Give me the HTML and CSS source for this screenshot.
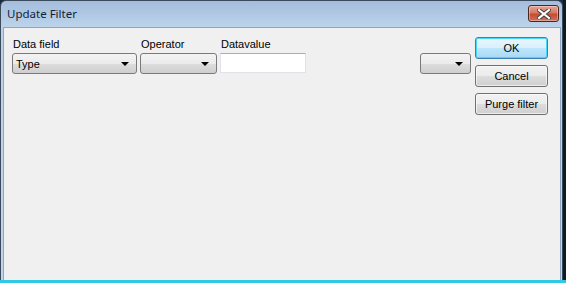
FILE: index.html
```html
<!DOCTYPE html>
<html>
    <head>
        <title>Update Filter</title>
        <link rel="stylesheet" href="styles.css">
    </head>
    <body>
        <div class="screen">
            <div class="window">
                <div class="titlebar">
                    <span class="title">Update Filter</span>
                    <button class="close-btn" type="button">
                        <svg width="14" height="10" viewBox="0 0 14 10">
                            <path d="M2 1 L12 9 M12 1 L2 9" stroke="#3a3a3a" stroke-width="4" stroke-linecap="square"/>
                            <path d="M2 1 L12 9 M12 1 L2 9" stroke="#ffffff" stroke-width="2.2" stroke-linecap="square"/>
                        </svg>
                    </button>
                </div>
                <div class="client">
                    <div class="filter-row">
                        <div class="field field-data">
                            <label>Data field</label>
                            <div class="combo combo-wide"><span>Type</span><i class="arrow"></i></div>
                        </div>
                        <div class="field field-op">
                            <label>Operator</label>
                            <div class="combo combo-op"><span></span><i class="arrow"></i></div>
                        </div>
                        <div class="field field-value">
                            <label>Datavalue</label>
                            <div class="textbox"></div>
                        </div>
                        <div class="field field-extra">
                            <div class="combo combo-small"><span></span><i class="arrow"></i></div>
                        </div>
                    </div>
                    <div class="buttons">
                        <button class="btn btn-default" type="button">OK</button>
                        <button class="btn" type="button">Cancel</button>
                        <button class="btn" type="button">Purge filter</button>
                    </div>
                </div>
            </div>
            <div class="outside"></div>
        </div>
        <div class="taskbar-edge"></div>
    </body>
</html>
```

FILE: styles.css
```css
:root {
    --client-bg: #f0f0f0;
    --title-font: "Noto Sans", "Open Sans", sans-serif;
    --ui-font: "Liberation Sans", Arial, sans-serif;
}

*, *::before, *::after {
    box-sizing: border-box;
}

body {
    margin: 0px;
    width: 566px;
    height: 283px;
    overflow: hidden;
    background-color: #1b2a38;
    font-family: var(--ui-font);
}

.screen {
    display: flex;
    height: 280px;
}

.window {
    width: 563px;
    height: 280px;
    display: flex;
    flex-direction: column;
    border: 1px solid #3b4b5c;
    border-bottom: 0px;
    border-radius: 6px 6px 0 0;
    background: linear-gradient(to bottom, #a3bddb 0px, #bcd3ea 26px, #bfd5ec 100%);
    padding: 0px 1px 0px 2px;
}

.outside {
    flex: 1;
    background-color: #111a22;
}

.taskbar-edge {
    height: 3px;
    background-color: #2fc9e6;
}

.titlebar {
    height: 26px;
    display: flex;
    align-items: center;
    justify-content: space-between;
    padding: 0px 2px 0px 4px;
}

.title {
    font-family: var(--title-font);
    font-size: 11.5px;
    color: #14223a;
    margin-top: -1px;
}

.close-btn {
    align-self: flex-start;
    width: 31px;
    height: 17px;
    margin-top: 4px;
    padding: 0px;
    display: flex;
    align-items: center;
    justify-content: center;
    border: 1px solid #4a2620;
    border-radius: 3px;
    background: linear-gradient(to bottom, #e8a597 0%, #d67964 45%, #c24d33 55%, #d4705a 100%);
    box-shadow: inset 0 0 0 1px rgba(255,255,255,0.35);
}

.client {
    flex: 1;
    display: flex;
    justify-content: space-between;
    background-color: var(--client-bg);
    border: 1px solid #8fa6bf;
    border-bottom: 0px;
    padding: 9px 12px 0px 8px;
}

.filter-row {
    display: flex;
    align-items: flex-start;
}

.field {
    display: flex;
    flex-direction: column;
    margin-right: 3px;
}

.field label {
    font-size: 11px;
    color: #000;
    height: 16px;
    line-height: 14px;
    padding-left: 1px;
}

.field-value {
    margin-right: 114px;
}

.field-extra {
    padding-top: 16px;
}

.combo {
    height: 21px;
    display: flex;
    align-items: center;
    justify-content: space-between;
    border: 1px solid #7a7a7a;
    border-radius: 3px;
    background: linear-gradient(to bottom, #f3f3f3 0%, #ebebeb 50%, #dddddd 51%, #cfcfcf 100%);
    padding: 0px 7px 0px 3px;
    font-size: 11px;
    color: #000;
}

.combo-wide {
    width: 125px;
}

.combo-op {
    width: 77px;
}

.combo-small {
    width: 51px;
}

.arrow {
    width: 0px;
    height: 0px;
    border-left: 4px solid transparent;
    border-right: 4px solid transparent;
    border-top: 4px solid #000;
    margin-top: 1px;
}

.textbox {
    width: 86px;
    height: 20px;
    border: 1px solid #dfe3e8;
    border-top-color: #abadb3;
    border-left-color: #e2e3ea;
    background-color: #fff;
}

.buttons {
    display: flex;
    flex-direction: column;
    gap: 6px;
}

.btn {
    width: 73px;
    height: 22px;
    padding: 0px;
    font-family: var(--ui-font);
    font-size: 11px;
    color: #000;
    border: 1px solid #707070;
    border-radius: 3px;
    background: linear-gradient(to bottom, #f2f2f2 0%, #ebebeb 50%, #dddddd 51%, #cfcfcf 100%);
    box-shadow: inset 0 0 0 1px rgba(255,255,255,0.6);
}

.btn-default {
    border-color: #3c7fb1;
    background: linear-gradient(to bottom, #eaf6fd 0%, #d9f0fc 50%, #bee6fd 51%, #a7d9f5 100%);
    box-shadow: inset 0 0 0 1px #48d8fb;
}
```
